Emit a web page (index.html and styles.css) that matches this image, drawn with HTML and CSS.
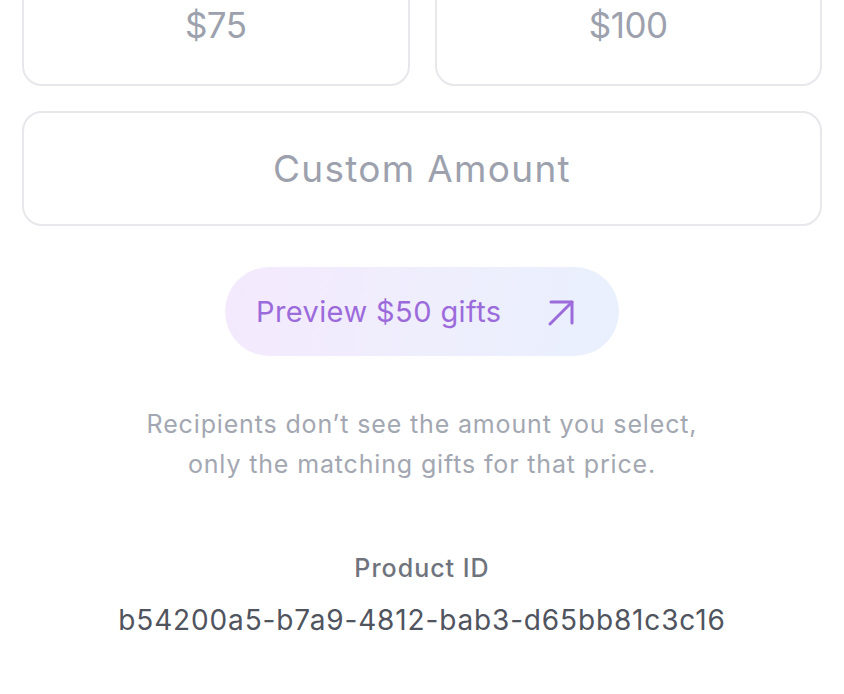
FILE: index.html
```html
<!DOCTYPE html>
<html lang="en">
<head>
<meta charset="utf-8">
<title>Gift amount</title>
<link rel="stylesheet" href="styles.css">
</head>
<body>
<main class="page">
  <div class="amounts">
    <button class="amount-card">$75</button>
    <button class="amount-card">$100</button>
  </div>
  <button class="custom-amount">Custom Amount</button>
  <div class="preview-wrap">
    <button class="preview-btn">
      <span class="preview-label">Preview $50 gifts</span>
      <svg class="preview-icon" width="28" height="28" viewBox="0 0 28 28" fill="none" stroke="currentColor" stroke-width="3" stroke-linecap="round" stroke-linejoin="round">
        <path d="M3 26 L25 4"/>
        <path d="M4 4 H25 V25"/>
      </svg>
    </button>
  </div>
  <p class="note">Recipients don’t see the amount you select,<br>only the matching gifts for that price.</p>
  <div class="product">
    <div class="product-label">Product ID</div>
    <div class="product-id">b54200a5-b7a9-4812-bab3-d65bb81c3c16</div>
  </div>
</main>
</body>
</html>
```

FILE: styles.css
```css
html, body {
  margin: 0;
  padding: 0;
  background: #ffffff;
}

body {
  font-family: "Inter", "Noto Sans", sans-serif;
  overflow: hidden;
}

.page {
  padding: 0 22px;
  display: flex;
  flex-direction: column;
}

.amounts {
  margin-top: -36px;
  display: grid;
  grid-template-columns: 1fr 1fr;
  gap: 25px;
}

.amount-card,
.custom-amount {
  font-family: inherit;
  background: #ffffff;
  border: 2px solid #e7e7ec;
  border-radius: 20px;
  color: #9ca1ad;
  cursor: pointer;
  padding: 0;
}

.amount-card {
  height: 122px;
  font-size: 35px;
  letter-spacing: -0.5px;
}

.custom-amount {
  margin-top: 25px;
  height: 115px;
  font-size: 37px;
  letter-spacing: 1.3px;
}

.preview-wrap {
  display: flex;
  justify-content: center;
  margin-top: 41px;
}

.preview-btn {
  font-family: inherit;
  width: 394px;
  height: 89px;
  border: none;
  border-radius: 45px;
  background: linear-gradient(100deg, #f4e9fd 0%, #efeefd 50%, #e9f0fd 100%);
  color: #9c6bdb;
  display: flex;
  align-items: center;
  justify-content: space-between;
  padding: 0 44px 0 31px;
  cursor: pointer;
}

.preview-label {
  font-size: 29px;
  letter-spacing: 0.4px;
}

.preview-icon {
  display: block;
}

.note {
  margin: 48px 0 0;
  text-align: center;
  font-size: 25px;
  line-height: 40px;
  color: #a3a7b1;
  letter-spacing: 0.85px;
}

.product {
  margin-top: 66px;
  text-align: center;
}

.product-label {
  font-size: 25px;
  font-weight: 500;
  color: #6f737d;
  line-height: 36px;
  letter-spacing: 1px;
}

.product-id {
  margin-top: 16px;
  font-size: 28px;
  line-height: 36px;
  color: #50545e;
  letter-spacing: 0.85px;
}
```
